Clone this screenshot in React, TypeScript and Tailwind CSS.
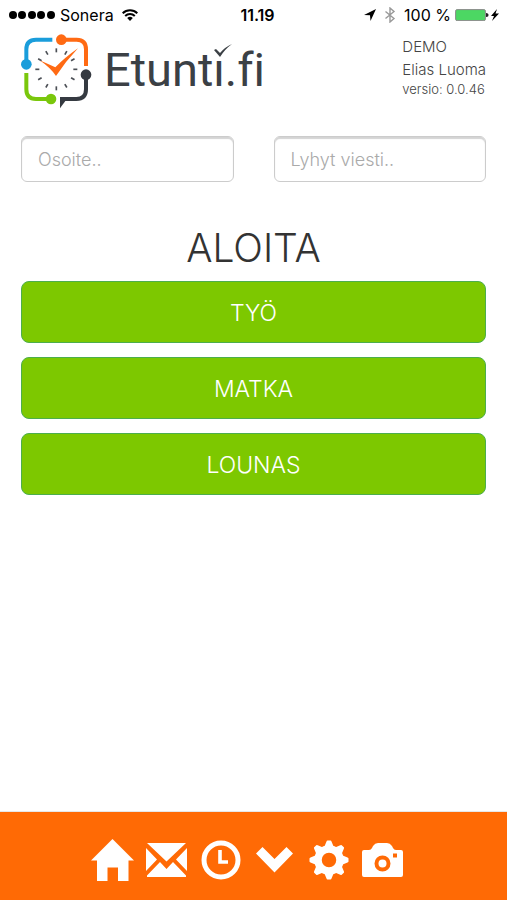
import { useState } from "react";

const ACTIONS = ["TYÖ", "MATKA", "LOUNAS"];

const TICKS = [0, 30, 60, 90, 120, 150, 180, 210, 240, 270, 300, 330];

const TEETH = [0, 45, 90, 135, 180, 225, 270, 315];

function StatusBar() {
  return (
    <div className="grid h-[30px] grid-cols-3 items-center px-2 text-black">
      <div className="flex items-center text-base">
        <svg className="mr-1 h-2 w-12" viewBox="0 0 48 8">
          {[5, 14, 24, 33, 43].map((x) => (
            <circle key={x} cx={x} cy="4" r="4" />
          ))}
        </svg>
        <span>Sonera</span>
        <svg className="ml-2 h-3 w-4" viewBox="0 0 16 12" fill="none" stroke="black" strokeWidth="2">
          <path d="M.7 4.3a10.3 10.3 0 0 1 14.6 0M3.2 7a6.8 6.8 0 0 1 9.6 0" />
          <path d="M5.2 9a4 4 0 0 1 5.6 0L8 12z" fill="black" stroke="none" />
        </svg>
      </div>
      <div className="pl-2 text-center text-base font-semibold">11.19</div>
      <div className="flex items-center justify-end whitespace-nowrap text-base">
        <svg className="mr-2 h-3 w-3 shrink-0" viewBox="0 0 12 12">
          <path d="M12 0 6.5 12 6 6.3 0 6z" />
        </svg>
        <svg className="mr-2 h-4 w-3 shrink-0" viewBox="0 0 12 16" fill="none" stroke="#999" strokeWidth="1.4">
          <path d="M1.5 4.5 10 11.5 6 15V1l4 3.5-8.5 7" />
        </svg>
        <span>100 %</span>
        <svg className="ml-1 h-3 w-11 shrink-0" viewBox="0 0 44 12">
          <rect x=".6" y=".6" width="29.8" height="11" rx="1.5" fill="#4cd763" stroke="#8a8a8a" />
          <path d="M31 4c2 0 2.5 1 2.5 2s-.5 2-2.5 2z" fill="#222" />
          <path d="M42 0 36 7h3l-2 5 7-7.5h-3.5z" />
        </svg>
      </div>
    </div>
  );
}

function LogoMark() {
  return (
    <svg className="h-[76px] w-[71px] shrink-0" viewBox="33 24 213 228" fill="none" strokeWidth="12">
      <path d="M127 44H78q-29 0-29 29v45" stroke="#1a9ddb" />
      <circle cx="49" cy="118" r="16" fill="#1a9ddb" />
      <path d="M153 44h47q28 0 28 29v50" stroke="#ff6a13" />
      <circle cx="154" cy="44" r="16" fill="#ff6a13" />
      <path d="M49 144v49q0 29 29 29h45" stroke="#7ac70c" />
      <circle cx="123" cy="222" r="16" fill="#7ac70c" />
      <path d="M228 149v44q0 29-29 29h-43" stroke="#353a41" />
      <circle cx="228" cy="149" r="16" fill="#353a41" />
      <path d="M150 216h22l-6 12-16 22z" fill="#353a41" />
      {TICKS.map((deg) => (
        <path key={deg} d="M139 70v12" stroke="#4b4f55" strokeWidth="5" transform={`rotate(${deg} 139 133)`} />
      ))}
      <path d="M89 106 136 127Q165 97 204 70q-37 39-66 83-17-25-49-47z" fill="#ff6a13" />
    </svg>
  );
}

function Header() {
  return (
    <header className="flex items-start px-[21px] pt-[3px]">
      <LogoMark />
      <div className="ml-3 flex h-[74px] items-center font-[Roboto,sans-serif] text-[47px] text-[#3b4045] [font-variant-ligatures:none]">
        <span>Etunt</span>
        <span className="relative">
          i
          {/* the check mark stands in for the dot */}
          <svg className="absolute top-0 left-0 h-7 w-5" viewBox="0 0 20 28">
            <path d="M0 8h12v16H0z" fill="white" />
            <path d="M1 15 3 14l4 4Q12 12 19 9 12 14 7 22z" fill="#3b4045" />
          </svg>
        </span>
        <span>.fi</span>
      </div>
      <div className="ml-auto text-[15px] leading-[23px] font-light text-[#444]">
        <div className="pt-[2px]">DEMO</div>
        <div>Elias Luoma</div>
        <div className="text-[13px] leading-4">versio: 0.0.46</div>
      </div>
    </header>
  );
}

function TextField({ label }: { label: string }) {
  const [value, setValue] = useState("");

  return (
    <input
      type="text"
      aria-label={label}
      placeholder={label}
      value={value}
      onChange={(e) => setValue(e.target.value)}
      className="h-[46px] w-full min-w-0 rounded-md border border-[#ccc] px-4 text-lg font-light text-[#333] shadow-[inset_0_2px_1px_#d4d4d4] placeholder:text-[#aaa] focus:outline-none"
    />
  );
}

function HomeIcon() {
  return (
    <svg className="h-[42px] w-[43px]" viewBox="0 0 43 42" fill="currentColor">
      <path d="M21.5 0 43 21.5h-5.5V42H27V28.5H16.5V42H6V21.5H0z" />
    </svg>
  );
}

function MailIcon() {
  return (
    <svg className="h-[34px] w-[41px]" viewBox="0 0 41 34" fill="currentColor">
      <path d="M1 0h39L20.5 18.5zM0 5l11 11.5L0 28zM41 5v23L30 16.5zM14 19l6.500 7 6.500-7 13 13.500V34H1v-1.500z" />
    </svg>
  );
}

function ClockIcon() {
  return (
    <svg className="h-10 w-10" viewBox="0 0 40 40" fill="none" stroke="currentColor">
      <circle cx="20" cy="20" r="17" strokeWidth="5" />
      <path d="M19 10v12h8" strokeWidth="3.6" />
    </svg>
  );
}

function ChevronIcon() {
  return (
    <svg className="h-[26px] w-[37px]" viewBox="0 0 37 26" fill="currentColor">
      <path d="M6.5 0 18.5 12 30.5 0 37 6.5 18.5 25.5 0 6.5z" />
    </svg>
  );
}

function GearIcon() {
  return (
    <svg className="h-10 w-10" viewBox="0 0 40 40" fill="currentColor">
      <circle cx="20" cy="20" r="11" fill="none" stroke="currentColor" strokeWidth="7.5" />
      {TEETH.map((deg) => (
        <path key={deg} d="M15 7.5 17.5 1.5q.3-1 1-1h3q.7 0 1 1L25 7.5z" transform={`rotate(${deg} 20 20)`} />
      ))}
    </svg>
  );
}

function CameraIcon() {
  return (
    <svg className="h-[34px] w-[41px]" viewBox="0 0 41 34" fill="currentColor" fillRule="evenodd">
      <path d="M2 7h5q2 0 3-2l1-2q2-3 5-3h9q3 0 5 3l1 2q1 2 3 2h5q2 0 2 2v23q0 2-2 2H2q-2 0-2-2V9q0-2 2-2zM20.5 12.5a8 8 0 1 0 0 16 8 8 0 1 0 0-16zM31 10.5v4h4v-4z" />
      <circle cx="20.5" cy="20.5" r="4" />
    </svg>
  );
}

const NAV = [
  { label: "Etusivu", Icon: HomeIcon },
  { label: "Viestit", Icon: MailIcon },
  { label: "Tunnit", Icon: ClockIcon },
  { label: "Lisää", Icon: ChevronIcon },
  { label: "Asetukset", Icon: GearIcon },
  { label: "Kamera", Icon: CameraIcon },
];

export default function App() {
  return (
    <div className="flex min-h-screen flex-col bg-white font-[Inter,'Liberation_Sans',sans-serif]">
      <StatusBar />
      <Header />

      <main className="px-[21px] pt-[27px] pb-8">
        <div className="grid grid-cols-2 gap-10">
          <TextField label="Osoite.." />
          <TextField label="Lyhyt viesti.." />
        </div>

        <h1 className="mt-10 mb-[11px] pt-1 text-center text-[39px] leading-[44px] font-light text-[#333]">ALOITA</h1>

        <div className="flex flex-col gap-[14px]">
          {ACTIONS.map((action) => (
            <button
              key={action}
              className="h-[62px] w-full rounded-lg border border-[#4cae4c] bg-[#7dc800] pt-[2px] text-[23px] font-light text-white"
            >
              {action}
            </button>
          ))}
        </div>
      </main>

      <nav className="mt-auto flex h-[89px] justify-center border-t border-[#e7e7e7] bg-[#ff6a05] pt-2 pr-3 text-white">
        {NAV.map(({ label, Icon }) => (
          <button key={label} aria-label={label} className="flex w-[54px] items-center justify-center">
            <Icon />
          </button>
        ))}
      </nav>
    </div>
  );
}
